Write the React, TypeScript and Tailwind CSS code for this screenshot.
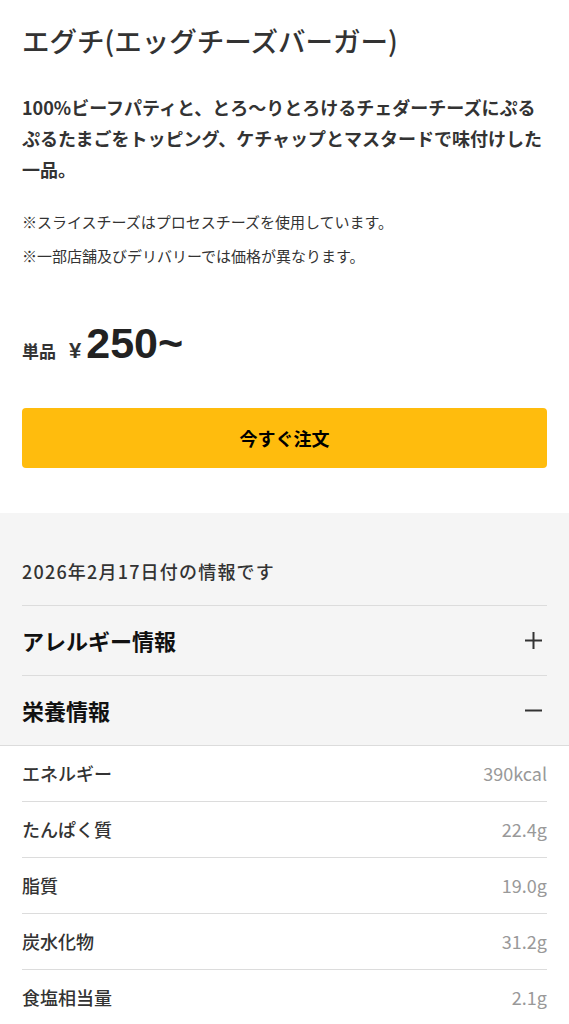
const nutrition = [
  { label: "エネルギー", value: "390kcal" },
  { label: "たんぱく質", value: "22.4g" },
  { label: "脂質", value: "19.0g" },
  { label: "炭水化物", value: "31.2g" },
  { label: "食塩相当量", value: "2.1g" },
];

const jp = "font-['Noto_Sans_CJK_JP','Noto_Sans',sans-serif]";

function ToggleIcon({ open }: { open: boolean }) {
  return (
    <svg width="17" height="17" viewBox="0 0 17 17" className="mr-[5px] text-[#333]">
      <line x1="0" y1="8.5" x2="17" y2="8.5" stroke="currentColor" strokeWidth="2" />
      {!open && <line x1="8.5" y1="0" x2="8.5" y2="17" stroke="currentColor" strokeWidth="2" />}
    </svg>
  );
}

export default function App() {
  return (
    <div className={`min-h-screen bg-white text-[#333] ${jp}`}>
      {/* Product info */}
      <div className="px-[22px] pt-[20px] pb-[45px]">
        <h1 className="text-[27.5px] leading-[40px] font-medium text-[#333]">
          エグチ(エッグチーズバーガー)
        </h1>
        <p className="mt-[32px] text-[18px] leading-[31px] font-bold text-[#333]">
          100%ビーフパティと、とろ〜りとろけるチェダーチーズにぷるぷるたまごをトッピング、ケチャップとマスタードで味付けした一品。
        </p>
        <p className="mt-[27px] text-[15px] leading-[20px]">
          ※スライスチーズはプロセスチーズを使用しています。
        </p>
        <p className="mt-[14px] text-[15px] leading-[20px]">
          ※一部店舗及びデリバリーでは価格が異なります。
        </p>

        <div className="mt-[55px] flex items-baseline">
          <span className="text-[17px] font-bold">単品</span>
          <span className="ml-[13px] font-['Liberation_Sans',Arial,sans-serif] text-[22px] font-bold">¥</span>
          <span className="ml-[5px] font-['Liberation_Sans',Arial,sans-serif] text-[43px] leading-[44px] font-bold text-[#222]">
            250~
          </span>
        </div>

        <button className="mt-[41px] flex h-[60px] w-full items-center justify-center rounded-[4px] bg-[#ffbc0d] text-[18px] font-bold text-black">
          今すぐ注文
        </button>
      </div>

      {/* Info / accordions */}
      <div className="border-b border-[#dcdcdc] bg-[#f5f5f5]">
        <div className="px-[22px]">
          <p className="pt-[45px] pb-[21px] text-[18px] leading-[26px] font-medium tracking-[1.2px]">
            2026年2月17日付の情報です
          </p>
          <div className="flex h-[70px] items-center justify-between border-t border-[#dcdcdc]">
            <span className="text-[22px] font-bold text-[#111]">アレルギー情報</span>
            <ToggleIcon open={false} />
          </div>
          <div className="flex h-[70px] items-center justify-between border-t border-[#dcdcdc]">
            <span className="text-[22px] font-bold text-[#111]">栄養情報</span>
            <ToggleIcon open={true} />
          </div>
        </div>
      </div>

      {/* Nutrition table */}
      <div className="px-[22px]">
        {nutrition.map((row) => (
          <div
            key={row.label}
            className="flex h-[56px] items-center justify-between border-b border-[#dcdcdc]"
          >
            <span className="text-[18px] font-medium">{row.label}</span>
            <span className="text-[18px] text-[#999]">{row.value}</span>
          </div>
        ))}
      </div>
    </div>
  );
}
